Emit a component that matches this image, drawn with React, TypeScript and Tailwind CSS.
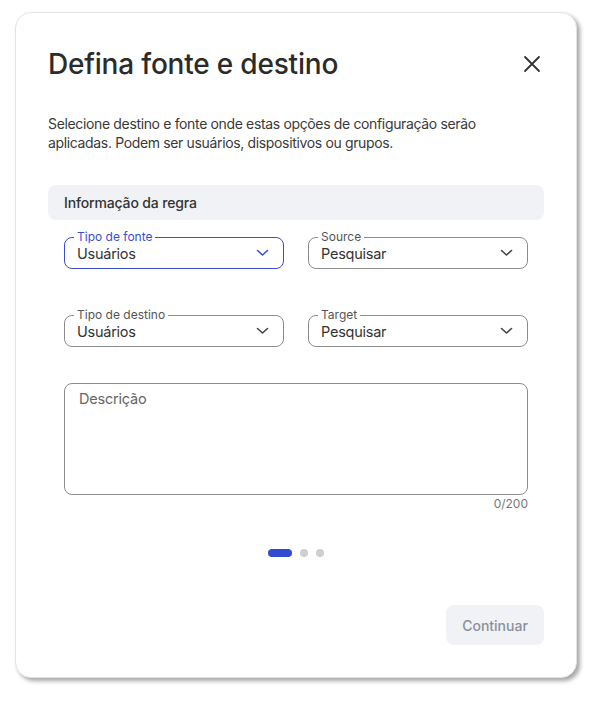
import { useState } from "react";

// ---- Floating-label select ----
function Select({
  label,
  value,
  active = false,
}: {
  label: string;
  value: string;
  active?: boolean;
}) {
  return (
    <div
      className={`relative flex h-[32px] items-center justify-between rounded-[8px] border pl-[12px] pr-[14px] ${
        active ? "border-[#3b4dd3]" : "border-[#8c8c8c]"
      }`}
    >
      <span
        className={`absolute -top-[9px] left-[9px] bg-white px-[3px] text-[12px] leading-[16px] ${
          active ? "text-[#3b4dd3]" : "text-[#555]"
        }`}
      >
        {label}
      </span>
      <span className="pt-[2px] text-[14.5px] leading-[20px] tracking-[-0.25px] text-[#333]">{value}</span>
      <svg
        width="13"
        height="8"
        viewBox="0 0 13 8"
        fill="none"
        stroke={active ? "#3b4dd3" : "#444"}
        strokeWidth="1.6"
        strokeLinecap="round"
        strokeLinejoin="round"
      >
        <path d="M1.5 1.5 L6.5 6 L11.5 1.5" />
      </svg>
    </div>
  );
}

export default function App() {
  const [step] = useState(0);

  return (
    <div className="min-h-[707px] bg-white pl-[15px] pt-[12px] font-['Inter',sans-serif]">
      <div className="flex h-[666px] w-[562px] flex-col rounded-[16px] border border-[#e4e4e4] bg-white px-[32px] pt-[33px] pb-[32px] shadow-[3px_3px_4px_rgba(0,0,0,0.35)]">
        {/* Header */}
        <div className="flex items-center justify-between">
          <h1 className="text-[28px] font-medium leading-[36px] tracking-[-0.2px] text-[#2b2b2b]">
            Defina fonte e destino
          </h1>
          <svg
            width="18"
            height="18"
            viewBox="0 0 18 18"
            stroke="#333"
            strokeWidth="1.8"
            strokeLinecap="round"
            className="mr-[3px]"
          >
            <path d="M2 2 L16 16 M16 2 L2 16" />
          </svg>
        </div>

        <p className="mt-[32px] max-w-[450px] text-[14px] leading-[19px] tracking-[-0.35px] text-[#3a3a3a]">
          Selecione destino e fonte onde estas opções de configuração serão
          aplicadas. Podem ser usuários, dispositivos ou grupos.
        </p>

        {/* Section header */}
        <div className="mt-[33px] flex h-[35px] items-center rounded-[8px] bg-[#f1f2f5] px-[16px]">
          <span className="text-[14px] font-medium tracking-[-0.15px] text-[#333]">Informação da regra</span>
        </div>

        {/* Fields */}
        <div className="px-[16px]">
          <div className="mt-[17px] grid grid-cols-2 gap-x-[24px] gap-y-[46px]">
            <Select label="Tipo de fonte" value="Usuários" active />
            <Select label="Source" value="Pesquisar" />
            <Select label="Tipo de destino" value="Usuários" />
            <Select label="Target" value="Pesquisar" />
          </div>

          <div className="mt-[36px] h-[112px] rounded-[8px] border border-[#8c8c8c] px-[14px] pt-[2px]">
            <span className="text-[14.5px] leading-[20px] tracking-[-0.2px] text-[#666]">Descrição</span>
          </div>
          <div className="mt-[1px] text-right text-[12px] leading-[16px] text-[#777]">0/200</div>
        </div>

        {/* Step dots */}
        <div className="mt-[37px] flex justify-center gap-[8px]">
          {[0, 1, 2].map((i) =>
            i === step ? (
              <span key={i} className="h-[8px] w-[24px] rounded-full bg-[#3349cf]" />
            ) : (
              <span key={i} className="h-[8px] w-[8px] rounded-full bg-[#cfcfd2]" />
            )
          )}
        </div>

        {/* Footer */}
        <div className="mt-auto flex justify-end">
          <button className="h-[40px] w-[98px] rounded-[8px] bg-[#f1f2f5] text-[14px] font-medium text-[#8a8f9c]">
            Continuar
          </button>
        </div>
      </div>
    </div>
  );
}
